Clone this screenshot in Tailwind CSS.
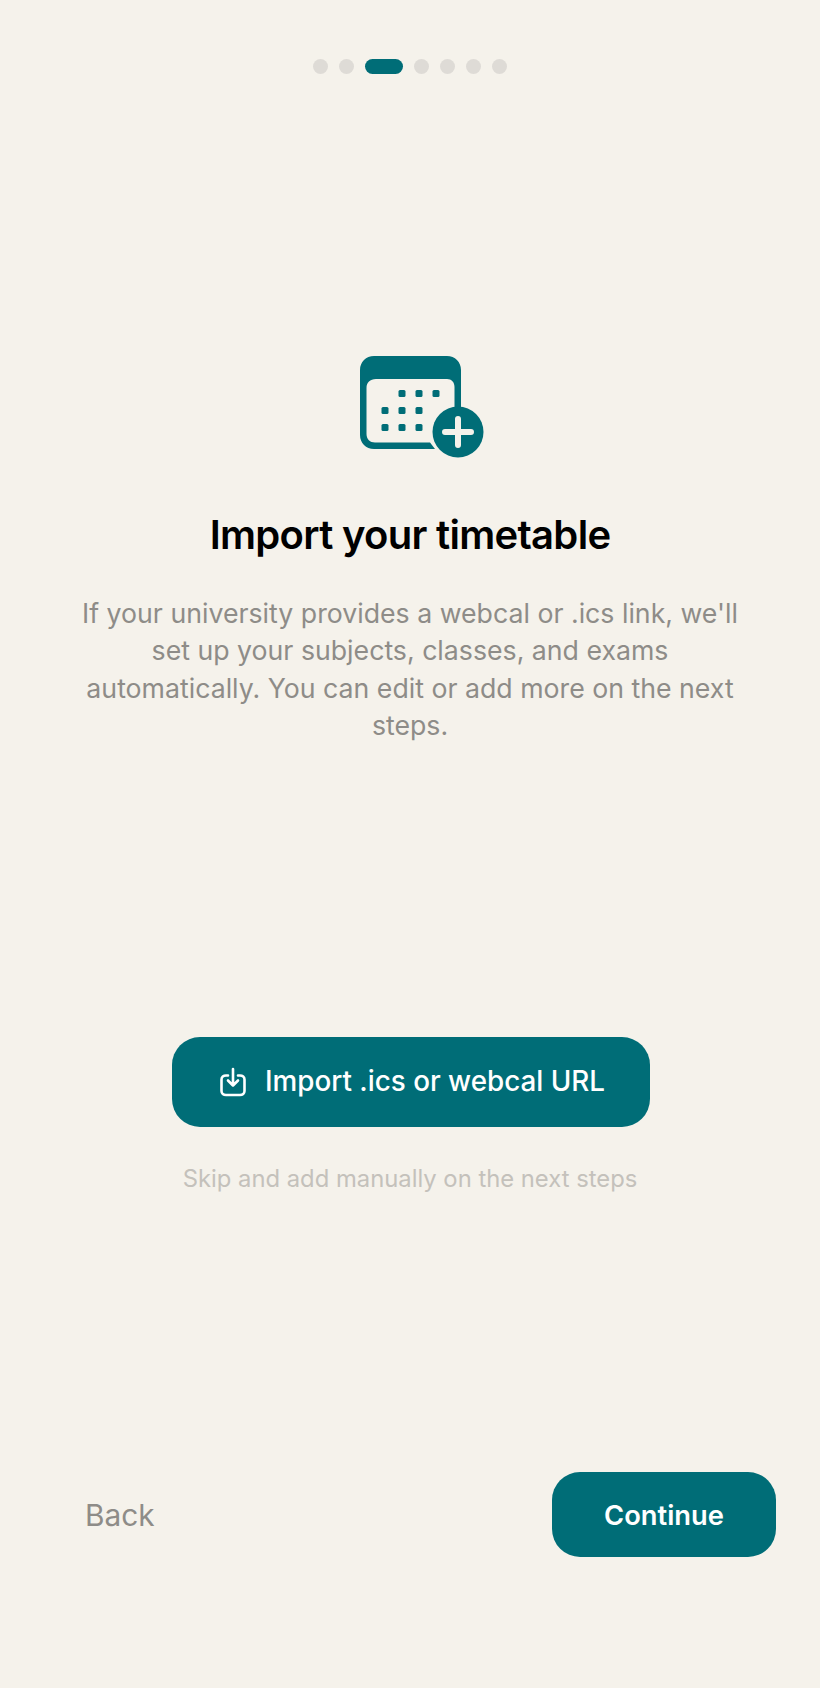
<!DOCTYPE html>
<html lang="en">
<head>
  <meta charset="UTF-8" />
  <title>Import your timetable</title>
  <script src="https://cdn.jsdelivr.net/npm/@tailwindcss/browser@4"></script>
</head>
<body class="bg-[#f5f2eb] font-['Inter',sans-serif]">
  <main class="h-[1688px] w-[820px] flex flex-col items-center overflow-hidden">
    <!-- Step dots -->
    <div class="mt-[59px] flex items-center gap-[11px]">
      <span class="size-[15px] rounded-full bg-[#dedbd6]"></span>
      <span class="size-[15px] rounded-full bg-[#dedbd6]"></span>
      <span class="h-[15px] w-[38px] rounded-full bg-[#006d77]"></span>
      <span class="size-[15px] rounded-full bg-[#dedbd6]"></span>
      <span class="size-[15px] rounded-full bg-[#dedbd6]"></span>
      <span class="size-[15px] rounded-full bg-[#dedbd6]"></span>
      <span class="size-[15px] rounded-full bg-[#dedbd6]"></span>
    </div>

    <!-- Calendar plus icon -->
    <svg class="mt-[282px] ml-[26px]" width="126" height="104" viewBox="0 0 126 104" fill="none">
      <path fill-rule="evenodd" fill="#006d77" d="M14 0H87C95 0 101 6 101 14V53H94.5V31C94.5 26 91.5 23 87 23H16C10 23 6.5 26.5 6.5 32V78C6.5 83 10 86.5 15 86.5H70L75 93H14C6 93 0 87 0 79V14C0 6 6 0 14 0Z" />
      <rect x="38.5" y="34" width="7" height="7" rx="1.5" fill="#006d77" />
      <rect x="55.5" y="34" width="7" height="7" rx="1.5" fill="#006d77" />
      <rect x="72.5" y="34" width="7" height="7" rx="1.5" fill="#006d77" />
      <rect x="21.5" y="51" width="7" height="7" rx="1.5" fill="#006d77" />
      <rect x="38.5" y="51" width="7" height="7" rx="1.5" fill="#006d77" />
      <rect x="55.5" y="51" width="7" height="7" rx="1.5" fill="#006d77" />
      <rect x="21.5" y="68" width="7" height="7" rx="1.5" fill="#006d77" />
      <rect x="38.5" y="68" width="7" height="7" rx="1.5" fill="#006d77" />
      <rect x="55.5" y="68" width="7" height="7" rx="1.5" fill="#006d77" />
      <circle cx="98" cy="76" r="25.5" fill="#006d77" />
      <path d="M98 63V89M85 76H111" stroke="#f5f2eb" stroke-width="6" stroke-linecap="round" />
    </svg>

    <h1 class="mt-[50px] text-[40px] leading-[50px] font-semibold tracking-[-0.7px] text-black">Import your timetable</h1>
    <p class="mt-[35px] w-[690px] text-center text-[26.7px] leading-[37.3px] text-[#8e8c88]">If your university provides a webcal or .ics link, we'll set up your subjects, classes, and exams automatically. You can edit or add more on the next steps.</p>

    <button class="mt-[293px] ml-[1px] flex h-[90px] w-[478px] items-center justify-center gap-[19px] rounded-[28px] bg-[#006d77] pl-[4px] text-[27.8px] font-medium text-white">
      <svg width="26" height="30" viewBox="0 0 26 30" fill="none" stroke="#fff" stroke-width="2.6" stroke-linecap="round" stroke-linejoin="round">
        <path d="M8 8.5H6C3.5 8.5 1.5 10 1.5 12.5V24C1.5 26.5 3.5 28 6 28H20C22.5 28 24.5 26.5 24.5 24V12.5C24.5 10 22.5 8.5 20 8.5H18" />
        <path d="M13 2V18.5M8 13.5L13 18.5L18 13.5" />
      </svg>
      Import .ics or webcal URL
    </button>
    <a class="mt-[36px] text-[23.8px] leading-[32px] text-[#c4c1bb]">Skip and add manually on the next steps</a>

    <!-- Bottom nav -->
    <div class="mt-auto mb-[131px] flex w-full items-center justify-between pr-[44px] pl-[85px]">
      <button class="pt-[2px] text-[29.8px] text-[#8e8c88]">Back</button>
      <button class="flex h-[85px] w-[224px] items-center justify-center rounded-[28px] bg-[#006d77] pt-[3px] text-[27.3px] font-semibold text-white">Continue</button>
    </div>
  </main>
</body>
</html>
